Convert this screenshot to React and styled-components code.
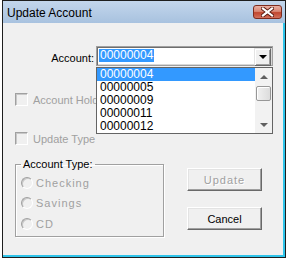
import React from "react";
import styled, { createGlobalStyle } from "styled-components";

const GlobalStyle = createGlobalStyle`
  html, body {
    margin: 0;
    padding: 0;
    background: #fff;
  }
  body {
    font-family: "Liberation Sans", Arial, sans-serif;
    font-size: 11px;
    color: #000;
  }
  * { box-sizing: border-box; }
`;

const Window = styled.div`
  margin-left: 2px;
  width: 284px;
  height: 258px;
  border: 1px solid #1e1e1e;
  display: flex;
  flex-direction: column;
  background: #f0f0f0;
`;

const TitleBar = styled.div`
  height: 22px;
  flex: none;
  display: flex;
  align-items: center;
  justify-content: space-between;
  padding: 0 3px 0 4px;
  background: linear-gradient(#c3d6ec, #a8c2df);
`;

const Title = styled.span`
  font-size: 12px;
  padding-top: 1px;
`;

const CloseButton = styled.div`
  width: 29px;
  height: 14px;
  border: 1px solid #7d2b1e;
  border-radius: 3px;
  background: linear-gradient(#eab0a3 0%, #d98674 45%, #c1462f 55%, #d2705c 100%);
  display: flex;
  align-items: center;
  justify-content: center;
`;

const Client = styled.div`
  flex: 1;
  display: flex;
  flex-direction: column;
  padding: 23px 0 0 12px;
  border-right: 2px solid #2fc4ea;
  border-bottom: 2px solid #2fc4ea;
`;

const AccountRow = styled.div`
  display: flex;
  height: 20px;
`;

const FieldLabel = styled.label`
  width: 79px;
  margin-right: 2px;
  text-align: right;
  line-height: 20px;
  padding-top: 2px;
`;

const ComboWrap = styled.div`
  position: relative;
  width: 177px;
`;

const Combo = styled.div`
  height: 20px;
  display: flex;
  align-items: flex-start;
  background: #fff;
  border: 1px solid #a0a0a0;
  box-shadow: inset 1px 1px 0 #6d6d6d, inset -1px -1px 0 #d8d8d8;
  padding: 2px 1px 0 2px;
`;

const SelectedText = styled.span`
  font-size: 12px;
  line-height: 13px;
  padding: 0 1px;
  background: #3399ff;
  color: #fff;
`;

const DropButton = styled.div`
  margin: -1px 0 0 auto;
  width: 17px;
  height: 18px;
  background: #f0f0f0;
  border: 1px solid;
  border-color: #e3e3e3 #696969 #696969 #e3e3e3;
  box-shadow: inset 1px 1px 0 #fff, inset -1px -1px 0 #a0a0a0;
  display: flex;
  align-items: center;
  justify-content: center;
`;

const Arrow = styled.div`
  width: 0;
  height: 0;
  border-left: ${(p) => p.$size}px solid transparent;
  border-right: ${(p) => p.$size}px solid transparent;
  ${(p) =>
    p.$up
      ? `border-bottom: ${p.$size}px solid ${p.$color};`
      : `border-top: ${p.$size}px solid ${p.$color};`}
`;

const DropList = styled.div`
  position: absolute;
  top: 21px;
  left: 0;
  width: 177px;
  height: 67px;
  z-index: 2;
  display: flex;
  background: #fff;
  border: 1px solid #646464;
`;

const Items = styled.div`
  flex: 1;
  display: flex;
  flex-direction: column;
`;

const Item = styled.div`
  height: 13px;
  line-height: 13px;
  font-size: 12px;
  padding-left: 3px;
  background: ${(p) => (p.$selected ? "#3399ff" : "transparent")};
  color: ${(p) => (p.$selected ? "#fff" : "#000")};
`;

const ScrollBar = styled.div`
  width: 17px;
  display: flex;
  flex-direction: column;
  background: #f2f2f2;
`;

const ScrollArrow = styled.div`
  height: 17px;
  display: flex;
  align-items: center;
  justify-content: center;
`;

const Thumb = styled.div`
  height: 15px;
  margin: 1px 1px 0;
  border: 1px solid #979797;
  border-radius: 2px;
  background: linear-gradient(90deg, #f1f1f1, #dcdcdc);
  box-shadow: inset 1px 1px 0 #fff;
`;

const Track = styled.div`
  flex: 1;
`;

const CheckRow = styled.div`
  display: flex;
  align-items: center;
  gap: 5px;
  height: 13px;
  margin-top: ${(p) => p.$top}px;
`;

const CheckBox = styled.span`
  width: 13px;
  height: 13px;
  border: 1px solid;
  border-color: #a0a0a0 #fff #fff #a0a0a0;
  box-shadow: inset 1px 1px 0 #c8c8c8;
  background: #f0f0f0;
`;

const DisabledText = styled.span`
  color: #a0a0a0;
  white-space: nowrap;
  letter-spacing: ${(p) => p.$spacing || 0}px;
`;

const Bottom = styled.div`
  display: flex;
  align-items: flex-start;
  margin-top: 13px;
`;

const Group = styled.fieldset`
  margin: 0;
  width: 149px;
  height: 79px;
  padding: 0 5px;
  border: 1px solid #a0a0a0;
  box-shadow: 1px 1px 0 #fff, inset 1px 1px 0 #fff;
  display: flex;
  flex-direction: column;
  gap: 7.5px;
`;

const Legend = styled.legend`
  padding: 0 2px;
  line-height: 13px;
`;

const RadioRow = styled.div`
  display: flex;
  align-items: center;
  gap: 3px;
  height: 13px;
  margin-top: ${(p) => p.$top || 0}px;
`;

const Radio = styled.span`
  width: 12px;
  height: 12px;
  border-radius: 50%;
  border: 1px solid;
  border-color: #a0a0a0 #fff #fff #a0a0a0;
  box-shadow: inset 1px 1px 0 #c8c8c8;
  background: #f0f0f0;
`;

const Buttons = styled.div`
  margin: 10px 0 0 23px;
  display: flex;
  flex-direction: column;
  gap: 16px;
`;

const Button = styled.button`
  width: 75px;
  height: 23px;
  padding: 0;
  font: inherit;
  font-size: 11px;
  letter-spacing: ${(p) => (p.disabled ? 1 : 0)}px;
  background: #f0f0f0;
  color: ${(p) => (p.disabled ? "#a0a0a0" : "#000")};
  text-shadow: ${(p) => (p.disabled ? "1px 1px 0 #fff" : "none")};
  border: 1px solid;
  border-color: #fff #696969 #696969 #fff;
  box-shadow: inset -1px -1px 0 #a0a0a0, inset 1px 1px 0 #e3e3e3;
  border-radius: 0;
`;

const accounts = ["00000004", "00000005", "00000009", "00000011", "00000012"];

function CloseGlyph() {
  return (
    <svg width="13" height="10" viewBox="0 0 13 10">
      <path d="M2 1.5 L11 8.5 M11 1.5 L2 8.5" stroke="#5a1a10" strokeWidth="4" strokeLinecap="square" />
      <path d="M2 1.5 L11 8.5 M11 1.5 L2 8.5" stroke="#fff" strokeWidth="2.2" strokeLinecap="square" />
    </svg>
  );
}

export default function App() {
  return (
    <>
      <GlobalStyle />
      <Window>
        <TitleBar>
          <Title>Update Account</Title>
          <CloseButton>
            <CloseGlyph />
          </CloseButton>
        </TitleBar>
        <Client>
          <AccountRow>
            <FieldLabel>Account:</FieldLabel>
            <ComboWrap>
              <Combo>
                <SelectedText>00000004</SelectedText>
                <DropButton>
                  <Arrow $size={4} $color="#000" />
                </DropButton>
              </Combo>
              <DropList>
                <Items>
                  {accounts.map((a, i) => (
                    <Item key={a} $selected={i === 0}>
                      {a}
                    </Item>
                  ))}
                </Items>
                <ScrollBar>
                  <ScrollArrow>
                    <Arrow $up $size={4} $color="#606060" />
                  </ScrollArrow>
                  <Thumb />
                  <Track />
                  <ScrollArrow>
                    <Arrow $size={4} $color="#606060" />
                  </ScrollArrow>
                </ScrollBar>
              </DropList>
            </ComboWrap>
          </AccountRow>

          <CheckRow $top={27}>
            <CheckBox />
            <DisabledText>Account Holder</DisabledText>
          </CheckRow>
          <CheckRow $top={26}>
            <CheckBox />
            <DisabledText>Update Type</DisabledText>
          </CheckRow>

          <Bottom>
            <Group>
              <Legend>Account Type:</Legend>
              <RadioRow $top={5}>
                <Radio />
                <DisabledText $spacing={1}>Checking</DisabledText>
              </RadioRow>
              <RadioRow>
                <Radio />
                <DisabledText $spacing={1}>Savings</DisabledText>
              </RadioRow>
              <RadioRow>
                <Radio />
                <DisabledText $spacing={1}>CD</DisabledText>
              </RadioRow>
            </Group>
            <Buttons>
              <Button disabled>Update</Button>
              <Button>Cancel</Button>
            </Buttons>
          </Bottom>
        </Client>
      </Window>
    </>
  );
}
